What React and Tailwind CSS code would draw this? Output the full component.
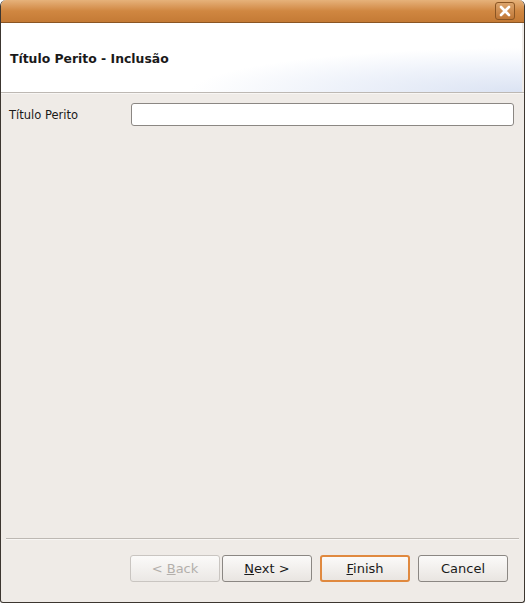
import { useState } from "react";

const Btn = ({ children, disabled, focus }) => (
  <button
    className={
      "w-[90px] h-[27px] rounded-[3px] text-[13px] bg-gradient-to-b from-[#fbfaf9] to-[#e9e5e1] " +
      (disabled
        ? "border border-[#c9c5c1] text-[#b3afab] from-[#f3f1ef] to-[#ebe8e5]"
        : focus
        ? "border-2 border-[#e0893f] text-[#1a1a1a]"
        : "border border-[#8b8783] text-[#1a1a1a]")
    }
  >
    {children}
  </button>
);

const App = () => {
  const [value, setValue] = useState("");

  return (
    <div className="w-[525px] h-[603px] flex flex-col bg-[#efebe7] font-['DejaVu_Sans',sans-serif] text-[13px] text-[#1a1a1a] border-x border-b border-[#3c3630] rounded-t-[6px] rounded-b-[3px] overflow-hidden">
      {/* title bar */}
      <div className="h-[23px] shrink-0 flex items-center justify-end pr-[9px] bg-gradient-to-b from-[#e6b27a] via-[#d08741] to-[#c47a35] border-b border-[#8a5523]">
        <div className="w-[20px] h-[18px] rounded-[3px] border border-[#8a5523] bg-gradient-to-b from-[#dca46b] to-[#bf7634] flex items-center justify-center">
          <svg width="12" height="12" viewBox="0 0 12 12">
            <path d="M2 2 L10 10 M10 2 L2 10" stroke="#fff" strokeWidth="2.6" strokeLinecap="round" />
          </svg>
        </div>
      </div>

      {/* header */}
      <div className="h-[69px] shrink-0 bg-[radial-gradient(ellipse_at_100%_100%,#dbe3f3_0%,#eef2fa_25%,#ffffff_45%)] flex items-center pl-[9px] pt-[4px] mr-[2px]">
        <span className="font-bold text-[12.4px]">Título Perito - Inclusão</span>
      </div>
      <div className="h-px bg-[#bdb8b3] shrink-0" />
      <div className="h-px bg-[#f8f6f4] shrink-0" />

      {/* body */}
      <div className="flex-1 px-[8px] pt-[9px]">
        <div className="flex items-center">
          <span className="w-[122px] text-[11.5px] mt-[2px]">Título Perito</span>
          <input
            value={value}
            onChange={(e) => setValue(e.target.value)}
            className="w-[383px] h-[23px] rounded-[3px] border border-[#8b8783] bg-white px-[4px] outline-none"
          />
        </div>
      </div>

      {/* footer */}
      <div className="mx-[5px] h-px bg-[#bdb8b3] shrink-0" />
      <div className="mx-[5px] h-px bg-[#f8f6f4] shrink-0" />
      <div className="h-[62px] shrink-0 flex items-start justify-end pt-[15px] pr-[16px]">
        <div className="flex gap-[2px]">
          <Btn disabled>
            &lt; <u>B</u>ack
          </Btn>
          <Btn>
            <u>N</u>ext &gt;
          </Btn>
        </div>
        <div className="flex gap-[8px] ml-[8px]">
          <Btn focus>
            <u>F</u>inish
          </Btn>
          <Btn>Cancel</Btn>
        </div>
      </div>
    </div>
  );
};

export default App;
